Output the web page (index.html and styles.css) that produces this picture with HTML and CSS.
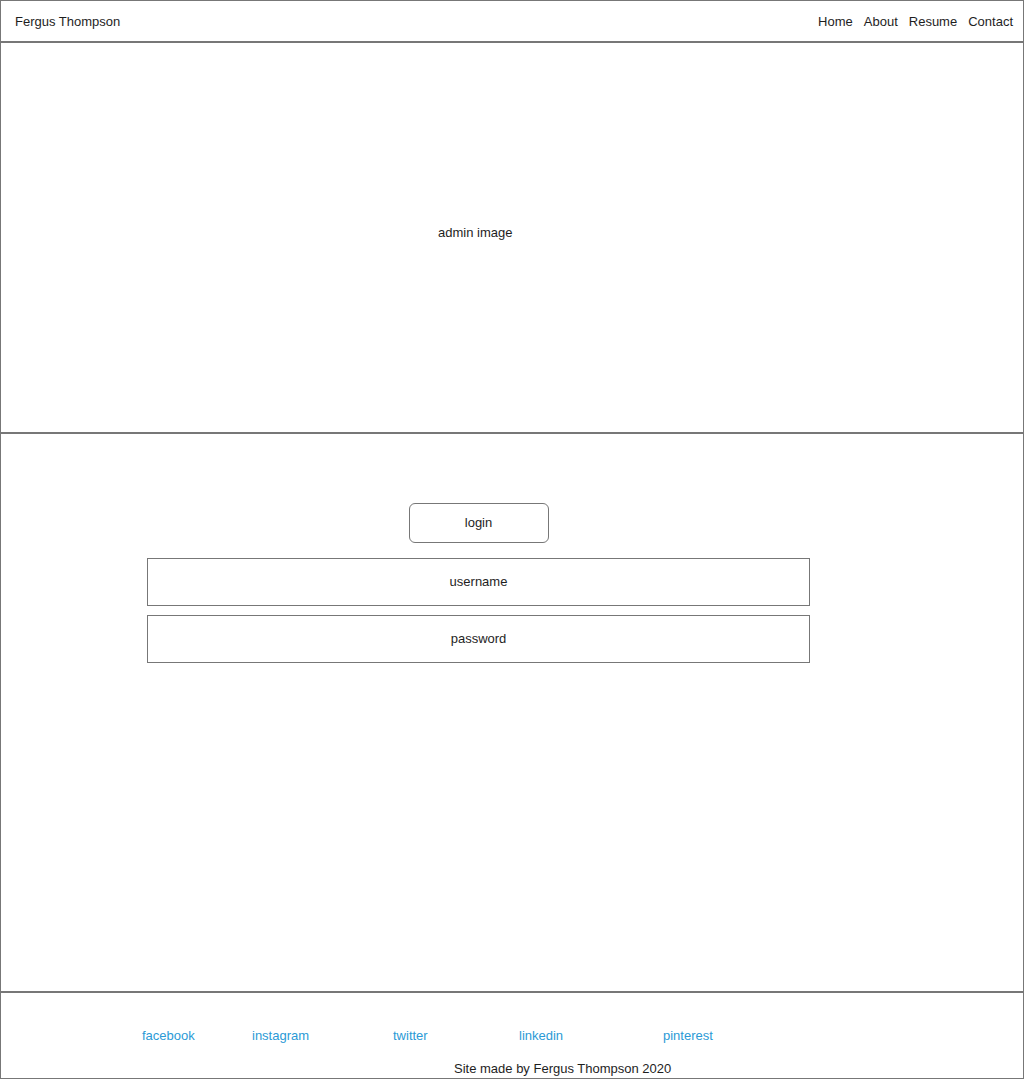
FILE: index.html
```html
<!DOCTYPE html>
<html>
<head>
<meta charset="utf-8">
<title>Fergus Thompson - Admin</title>
<link rel="stylesheet" href="styles.css">
</head>
<body>
<div class="frame">
  <header class="header">
    <div class="brand">Fergus Thompson</div>
    <nav class="nav">
      <span>Home</span><span>About</span><span>Resume</span><span>Contact</span>
    </nav>
  </header>
  <section class="hero">
    <div class="hero-label">admin image</div>
  </section>
  <main class="main">
    <div class="form">
      <div class="login-btn">login</div>
      <div class="field">username</div>
      <div class="field field-2">password</div>
    </div>
  </main>
  <footer class="footer">
    <div class="links">
      <span class="l1">facebook</span><span class="l2">instagram</span><span class="l3">twitter</span><span class="l4">linkedin</span><span class="l5">pinterest</span>
    </div>
    <div class="copy">Site made by Fergus Thompson 2020</div>
  </footer>
</div>
</body>
</html>
```

FILE: styles.css
```css
* { box-sizing: border-box; }
html, body { margin: 0; padding: 0; background: #fff; }
body {
  font-family: "Liberation Sans", Arial, sans-serif;
  font-size: 13px;
  line-height: 16px;
  color: #1e1e1e;
}
.frame {
  width: 1024px;
  height: 1079px;
  border: 1px solid #777;
  display: flex;
  flex-direction: column;
}
.header {
  height: 42px;
  border-bottom: 2px solid #777;
  display: flex;
  align-items: center;
  justify-content: space-between;
  padding: 2px 10px 0 14px;
  flex-shrink: 0;
}
.nav { display: flex; gap: 11px; padding-left: 1px; }
.hero {
  height: 391px;
  border-bottom: 2px solid #777;
  display: flex;
  align-items: center;
  flex-shrink: 0;
  padding-left: 437px;
  padding-bottom: 10px;
}
.main {
  height: 559px;
  border-bottom: 2px solid #777;
  flex-shrink: 0;
  padding: 69px 0 0 146px;
}
.form {
  width: 663px;
  display: flex;
  flex-direction: column;
  align-items: center;
}
.login-btn {
  width: 140px;
  height: 40px;
  border: 1px solid #777;
  border-radius: 6px;
  display: flex;
  align-items: center;
  justify-content: center;
}
.field {
  width: 663px;
  height: 48px;
  border: 1px solid #777;
  margin-top: 15px;
  display: flex;
  align-items: center;
  justify-content: center;
}
.field-2 { margin-top: 9px; }
.footer {
  flex: 1;
  padding-top: 35px;
}
.links {
  display: flex;
  padding-left: 141px;
  color: #2b9ad6;
}
.links span { display: block; }
.l1 { width: 110px; }
.l2 { width: 141px; }
.l3 { width: 126px; }
.l4 { width: 144px; }
.copy {
  margin-top: 17px;
  padding-left: 453px;
}
```
